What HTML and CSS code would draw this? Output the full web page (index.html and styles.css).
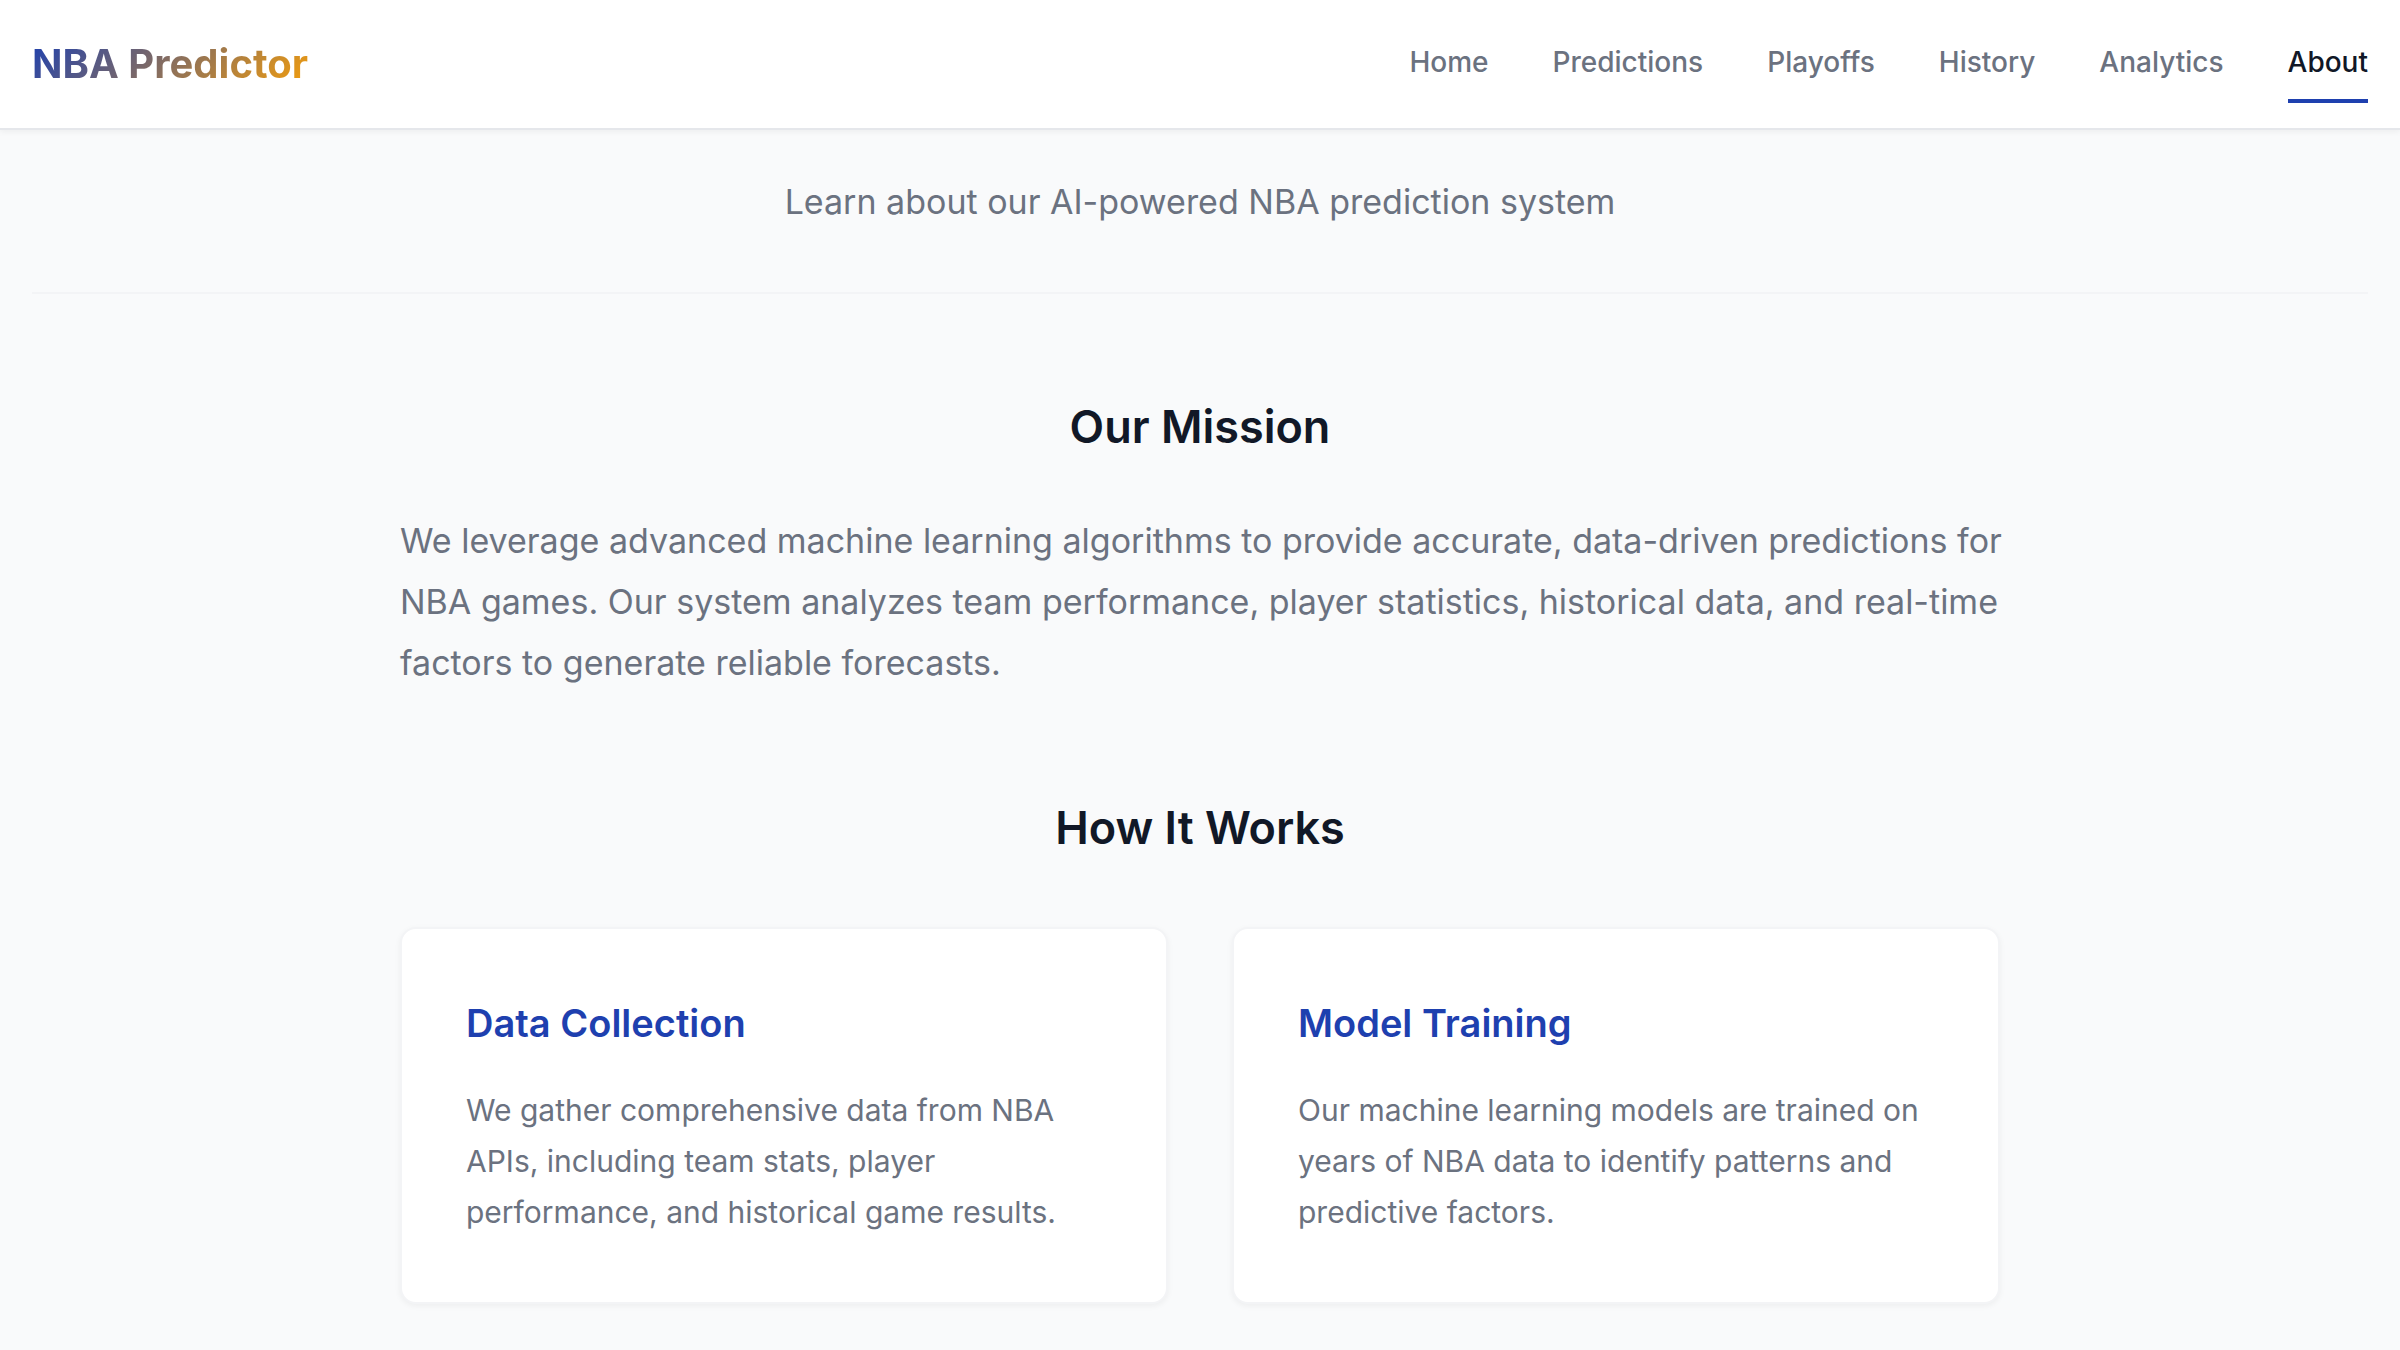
FILE: index.html
```html
<!DOCTYPE html>
<html lang="en">
<head>
  <meta charset="utf-8">
  <meta name="viewport" content="width=device-width, initial-scale=1">
  <title>About - NBA Predictor</title>
  <link rel="stylesheet" href="styles.css">
</head>
<body>
  <header class="site-header">
    <a class="logo" href="#">NBA Predictor</a>
    <nav class="nav" aria-label="Main">
      <a class="nav-link" href="#">Home</a>
      <a class="nav-link" href="#">Predictions</a>
      <a class="nav-link" href="#">Playoffs</a>
      <a class="nav-link" href="#">History</a>
      <a class="nav-link" href="#">Analytics</a>
      <a class="nav-link nav-link-active" href="#" aria-current="page">About</a>
    </nav>
  </header>
  <main class="page">
    <div class="page-intro">
      <p class="subtitle">Learn about our AI-powered NBA prediction system</p>
    </div>
    <div class="content">
      <section class="section">
        <h2 class="section-title">Our Mission</h2>
        <p class="lead">We leverage advanced machine learning algorithms to provide accurate, data-driven predictions for NBA games. Our system analyzes team performance, player statistics, historical data, and real-time factors to generate reliable forecasts.</p>
      </section>
      <section class="section">
        <h2 class="section-title">How It Works</h2>
        <div class="cards">
          <article class="card">
            <h3 class="card-title">Data Collection</h3>
            <p class="card-text">We gather comprehensive data from NBA APIs, including team stats, player performance, and historical game results.</p>
          </article>
          <article class="card">
            <h3 class="card-title">Model Training</h3>
            <p class="card-text">Our machine learning models are trained on years of NBA data to identify patterns and predictive factors.</p>
          </article>
        </div>
      </section>
    </div>
  </main>
</body>
</html>
```
FILE: styles.css
```css
*,
*::before,
*::after {
  box-sizing: border-box;
}

body {
  margin: 0;
  background: #f9fafb;
  color: #111827;
  font-family: Inter, "Liberation Sans", sans-serif;
}

h2,
h3,
p {
  margin: 0;
}

.site-header {
  position: sticky;
  top: 0;
  display: flex;
  align-items: center;
  justify-content: space-between;
  padding: 25px 32px;
  background: #ffffff;
  border-bottom: 2px solid #e5e7eb;
  box-shadow: 0 2px 6px rgba(0, 0, 0, 0.05);
}

.logo {
  background: linear-gradient(135deg, #1e40af, #f59e0b);
  background-clip: text;
  -webkit-background-clip: text;
  color: transparent;
  font-size: 40px;
  font-weight: 700;
  line-height: 50px;
  text-decoration: none;
}

.nav {
  display: flex;
  gap: 64px;
}

.nav-link {
  padding: 16px 0;
  border-bottom: 4px solid transparent;
  color: #6b7280;
  font-size: 28px;
  font-weight: 500;
  line-height: 42px;
  text-decoration: none;
}

.nav-link-active {
  border-bottom-color: #1e40af;
  color: #111827;
}

.page {
  padding: 0 32px;
}

.page-intro {
  padding: 41px 0 59px;
  border-bottom: 2px solid #f3f4f6;
  text-align: center;
}

.subtitle {
  color: #6b7280;
  font-size: 34px;
  line-height: 62px;
}

.content {
  max-width: 1600px;
  margin: 96px auto 0;
}

.section + .section {
  margin-top: 98px;
}

.section-title {
  margin-bottom: 46px;
  font-size: 45px;
  font-weight: 600;
  line-height: 74px;
  text-align: center;
}

.lead {
  margin-right: -12px;
  color: #6b7280;
  font-size: 34px;
  line-height: 61px;
}

.cards {
  display: grid;
  grid-template-columns: repeat(2, 1fr);
  gap: 64px;
  padding: 16px 0 40px;
}

.card {
  padding: 62px 64px 64px;
  background: #ffffff;
  border: 2px solid #f3f4f6;
  border-radius: 16px;
  box-shadow: 0 2px 6px rgba(0, 0, 0, 0.05);
}

.card-title {
  margin-bottom: 30px;
  color: #1e40af;
  font-size: 38px;
  font-weight: 600;
  line-height: 64px;
}

.card-text {
  color: #6b7280;
  font-size: 30px;
  line-height: 51px;
}
```
